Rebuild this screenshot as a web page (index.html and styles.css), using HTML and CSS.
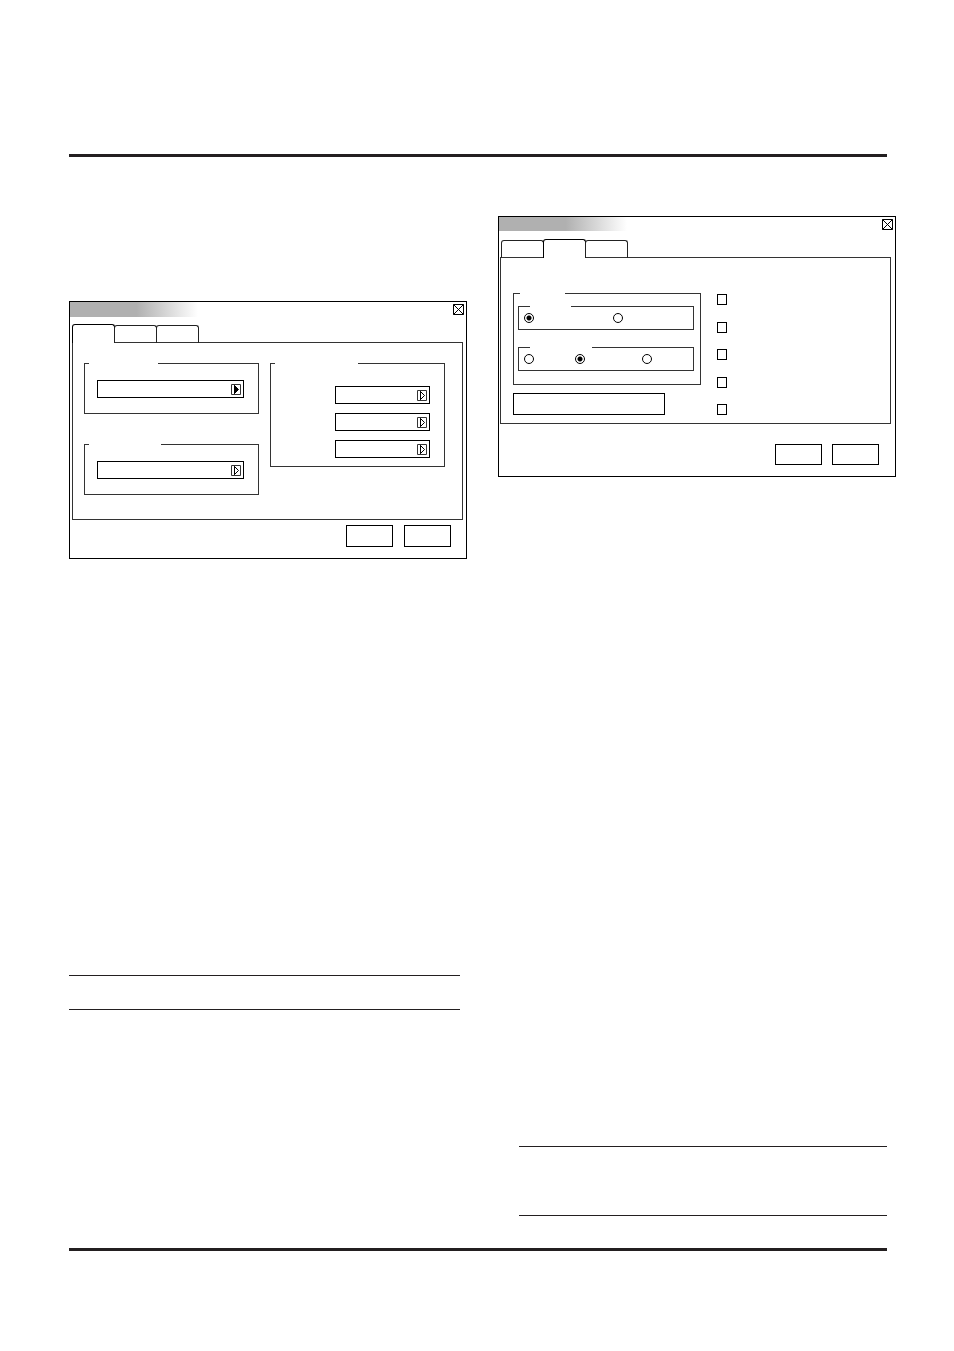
FILE: index.html
```html
<!DOCTYPE html>
<html lang="en">
<head>
    <meta charset="UTF-8" />
    <meta name="viewport" content="width=device-width, initial-scale=1" />
    <title>Settings</title>
    <link rel="stylesheet" href="styles.css">
</head>
<body>
    <!-- shared icons -->
    <svg class="sprite" aria-hidden="true">
        <symbol id="icon-close" viewBox="0 0 11 11">
            <path d="M.5.5h10v10h-10zM.5.5l10 10M10.5.5l-10 10" fill="none" stroke="#000" />
        </symbol>
        <symbol id="icon-arrow" viewBox="0 0 10 11">
            <path d="M.5.5h9v10h-9z" fill="none" stroke="#333" />
            <path d="M3.5 1v9" stroke="#333" />
            <path d="M3.5 1.5l4 4-4 4z" stroke="#000" />
        </symbol>
    </svg>

    <div class="page">
        <header class="page-rule"></header>

        <main class="columns">
            <section class="column">
                <div class="dialog dialog-first" role="dialog" aria-label="Settings, first tab">
                    <div class="title-row">
                        <div class="title-bar"></div>
                        <button class="close" aria-label="Close"><svg><use href="#icon-close" /></svg></button>
                    </div>
                    <div class="tabs" role="tablist">
                        <button class="tab active" role="tab" aria-selected="true" aria-label="Tab 1"></button>
                        <button class="tab" role="tab" aria-label="Tab 2"></button>
                        <button class="tab" role="tab" aria-label="Tab 3"></button>
                    </div>
                    <div class="panel panel-selects">
                        <div class="stack">
                            <fieldset aria-label="Group 1">
                                <legend class="legend-m"></legend>
                                <div class="fields">
                                    <div class="select">
                                        <select aria-label="Group 1 value"><option></option></select>
                                        <svg class="arrow filled"><use href="#icon-arrow" /></svg>
                                    </div>
                                </div>
                            </fieldset>
                            <fieldset aria-label="Group 2">
                                <legend class="legend-l"></legend>
                                <div class="fields">
                                    <div class="select">
                                        <select aria-label="Group 2 value"><option></option></select>
                                        <svg class="arrow"><use href="#icon-arrow" /></svg>
                                    </div>
                                </div>
                            </fieldset>
                        </div>
                        <fieldset aria-label="Group 3">
                            <legend class="legend-xl"></legend>
                            <div class="fields fields-indented">
                                <div class="select">
                                    <select aria-label="Group 3 value 1"><option></option></select>
                                    <svg class="arrow"><use href="#icon-arrow" /></svg>
                                </div>
                                <div class="select">
                                    <select aria-label="Group 3 value 2"><option></option></select>
                                    <svg class="arrow"><use href="#icon-arrow" /></svg>
                                </div>
                                <div class="select">
                                    <select aria-label="Group 3 value 3"><option></option></select>
                                    <svg class="arrow"><use href="#icon-arrow" /></svg>
                                </div>
                            </div>
                        </fieldset>
                    </div>
                    <div class="actions">
                        <button class="btn" aria-label="OK"></button>
                        <button class="btn" aria-label="Cancel"></button>
                    </div>
                </div>
                <div class="note"></div>
            </section>

            <section class="column">
                <div class="dialog dialog-second" role="dialog" aria-label="Settings, second tab">
                    <div class="title-row">
                        <div class="title-bar"></div>
                        <button class="close" aria-label="Close"><svg><use href="#icon-close" /></svg></button>
                    </div>
                    <div class="tabs" role="tablist">
                        <button class="tab" role="tab" aria-label="Tab 1"></button>
                        <button class="tab active" role="tab" aria-selected="true" aria-label="Tab 2"></button>
                        <button class="tab" role="tab" aria-label="Tab 3"></button>
                    </div>
                    <div class="panel panel-options">
                        <div class="options">
                            <fieldset aria-label="Options">
                                <legend class="legend-s"></legend>
                                <div class="option-groups">
                                    <fieldset aria-label="Option A">
                                        <legend class="legend-a"></legend>
                                        <div class="radios radios-two">
                                            <input type="radio" name="a" aria-label="Option A, choice 1" checked>
                                            <input type="radio" name="a" aria-label="Option A, choice 2">
                                        </div>
                                    </fieldset>
                                    <fieldset aria-label="Option B">
                                        <legend class="legend-b"></legend>
                                        <div class="radios radios-three">
                                            <input type="radio" name="b" aria-label="Option B, choice 1">
                                            <input type="radio" name="b" aria-label="Option B, choice 2" checked>
                                            <input type="radio" name="b" aria-label="Option B, choice 3">
                                        </div>
                                    </fieldset>
                                </div>
                            </fieldset>
                            <button class="btn btn-wide" aria-label="More"></button>
                        </div>
                        <div class="checks">
                            <input type="checkbox" aria-label="Setting 1">
                            <input type="checkbox" aria-label="Setting 2">
                            <input type="checkbox" aria-label="Setting 3">
                            <input type="checkbox" aria-label="Setting 4">
                            <input type="checkbox" aria-label="Setting 5">
                        </div>
                    </div>
                    <div class="actions">
                        <button class="btn" aria-label="OK"></button>
                        <button class="btn" aria-label="Cancel"></button>
                    </div>
                </div>
                <div class="note note-tall"></div>
            </section>
        </main>

        <footer class="page-rule"></footer>
    </div>
</body>
</html>
```
FILE: styles.css
```css
* {
    box-sizing: border-box;
}
body {
    margin: 0;
    background-color: #fff;
    font-family: "Liberation Sans", Arial, sans-serif;
    font-size: 12px;
}
.sprite {
    display: none;
}
.page {
    padding: 154px 58px 100px 69px;
}
.page-rule {
    height: 3px;
    margin-right: 9px;
    background-color: #231f20;
}
.columns {
    display: grid;
    grid-template-columns: 1fr 1fr;
    gap: 31px;
    padding: 59px 0 32px;
}
.column {
    display: flex;
    flex-direction: column;
    justify-content: space-between;
}

/* dialogs */
.dialog {
    border: 1px solid #000;
}
.dialog-first {
    margin-top: 85px;
}
.title-row {
    display: flex;
    justify-content: space-between;
    align-items: flex-start;
}
.title-bar {
    width: 128px;
    height: 15px;
    background: linear-gradient(to right, #b0b0b0 52%, #fff);
}
.dialog-second .title-bar {
    height: 14px;
}
.dialog-second .title-row {
    padding-bottom: 1px;
}
.close {
    width: 11px;
    height: 11px;
    margin: 2px 2px 0 0;
    padding: 0;
    border: 0;
    background: none;
}
.close svg {
    display: block;
    width: 11px;
    height: 11px;
}

/* tabs sit over the top border of the panel */
.tabs {
    position: relative;
    display: flex;
    align-items: flex-end;
    margin: 7px 0 -1px;
    padding-left: 2px;
}
.tab {
    width: 43px;
    height: 18px;
    padding: 0;
    border: 1px solid #222;
    border-bottom: 0;
    border-radius: 3px 3px 0 0;
    background: none;
}
.tab + .tab {
    margin-left: -1px;
}
.tab.active {
    height: 19px;
    border-color: #000;
    background-color: #fff;
}
.panel {
    display: grid;
    border: 1px solid #333;
}
.panel-selects {
    grid-template-columns: 1fr 1fr;
    align-items: start;
    gap: 11px;
    margin: 0 3px 0 2px;
    padding: 20px 17px 24px 11px;
}
.panel-options {
    grid-template-columns: 188fr 173fr;
    gap: 16px;
    margin: 0 4px 0 1px;
    padding: 35px 0 8px 12px;
}
.stack {
    display: grid;
    gap: 30px;
}

/* groups: the legend leaves a gap in the top line */
fieldset {
    min-width: 0;
    margin: 0;
    padding: 0;
    border: 1px solid #333;
}
legend {
    height: 1px;
    margin-left: 4px;
    padding: 0;
}
.legend-s {
    width: 45px;
    margin-left: 6px;
}
.legend-m {
    width: 69px;
}
.legend-l {
    width: 72px;
}
.legend-xl {
    width: 83px;
}
.legend-a {
    width: 41px;
    margin-left: 11px;
}
.legend-b {
    width: 62px;
    margin-left: 11px;
}
.fields {
    display: grid;
    gap: 9px;
    padding: 16px 14px 15px 12px;
}
.fields-indented {
    padding: 22px 14px 8px 64px;
}
.select {
    position: relative;
}
.select select {
    display: block;
    width: 100%;
    height: 18px;
    padding: 0 16px 0 4px;
    border: 1px solid #000;
    border-radius: 0;
    background: none;
    appearance: none;
}
.arrow {
    position: absolute;
    top: 4px;
    right: 3px;
    width: 10px;
    height: 11px;
    fill: none;
    pointer-events: none;
}
.arrow.filled {
    fill: #000;
}

/* radios and tick boxes */
.options {
    display: grid;
    gap: 8px;
}
.option-groups {
    display: grid;
    gap: 17px;
    padding: 12px 6px 13px 4px;
}
.radios {
    display: grid;
    align-items: center;
    height: 22px;
    padding-left: 5px;
}
.radios-two {
    grid-template-columns: 89fr 80fr;
}
.radios-three {
    grid-template-columns: 51fr 67fr 51fr;
}
input {
    width: 10px;
    height: 10px;
    margin: 0;
    border: 1px solid #000;
    background-color: #fff;
    appearance: none;
}
input[type="checkbox"] {
    height: 11px;
}
input[type="radio"] {
    border-radius: 50%;
}
input[type="radio"]:checked {
    background: radial-gradient(circle, #000 2px, #fff 3px);
}
.checks {
    display: flex;
    flex-direction: column;
    justify-content: space-between;
    padding-top: 1px;
}

/* buttons */
.actions {
    display: flex;
    justify-content: flex-end;
    gap: 11px;
    padding: 5px 15px 11px;
}
.dialog-second .actions {
    gap: 10px;
    padding: 20px 16px 11px;
}
.btn {
    width: 47px;
    height: 22px;
    padding: 0;
    border: 1px solid #000;
    background-color: #fff;
}
.dialog-second .actions .btn {
    height: 21px;
}
.btn-wide {
    width: 152px;
}

/* ruled notes at the foot of each column */
.note {
    height: 35px;
    margin: 0 7px 206px 0;
    border: solid #231f20;
    border-width: 1px 0;
}
.note-tall {
    height: 70px;
    margin: 669px 9px 0 21px;
}
```
